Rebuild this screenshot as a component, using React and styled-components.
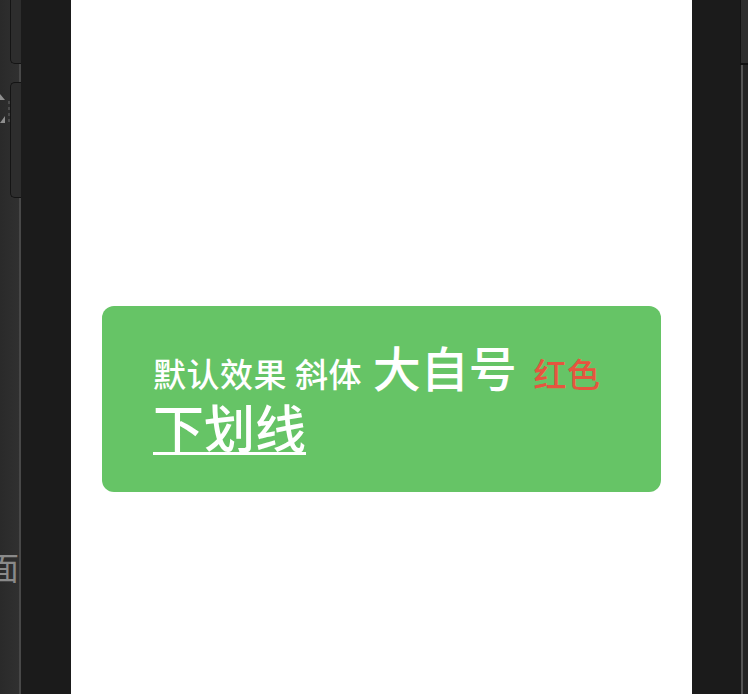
import styled, { createGlobalStyle } from 'styled-components';

const GlobalStyle = createGlobalStyle`
  html, body {
    margin: 0;
    padding: 0;
    background: #1b1b1b;
    overflow: hidden;
  }
  #root {
    height: 694px;
  }
`;

// Workspace frame: left dock, simulator screen, right dock
const Workspace = styled.div`
  display: flex;
  height: 694px;
  width: 748px;
  background: #1b1b1b;
  font-family: "Noto Sans CJK SC", "Noto Sans", sans-serif;
`;

const LeftDock = styled.div`
  width: 71px;
  flex-shrink: 0;
  display: flex;
`;

const SidePanel = styled.div`
  width: 19px;
  flex-shrink: 0;
  background: linear-gradient(90deg, #2a2a2a, #303030);
  border-right: 2px solid #484848;
  display: flex;
  flex-direction: column;
`;

const DockTab = styled.div`
  margin-left: 10px;
  width: 10px;
  height: ${({ h }) => h}px;
  margin-top: ${({ top }) => top}px;
  background: #2d2d2d;
  border: 1px solid #141414;
  border-top: ${({ first }) => (first ? 'none' : '1px solid #141414')};
  border-right: none;
  border-radius: ${({ first }) => (first ? '0 0 0 5px' : '5px 0 0 5px')};
  position: relative;
  z-index: 1;
  margin-right: -3px;
`;

const TabMarks = styled.div`
  display: flex;
  align-items: center;
  height: 40px;
  margin-top: -107px;
  margin-bottom: 67px;
`;

const CutGlyph = styled.div`
  width: 19px;
  overflow: hidden;
  margin-top: 350px;
  color: #8a8a8a;
  font-size: 32px;
  line-height: 36px;
  display: flex;
  justify-content: flex-end;
`;

const DockGap = styled.div`
  flex: 1;
  background: #1b1b1b;
`;

const Screen = styled.div`
  width: 621px;
  flex-shrink: 0;
  background: #ffffff;
  padding: 306px 31px 0;
  box-sizing: border-box;
`;

const Card = styled.div`
  background: #66c466;
  border-radius: 12px;
  padding: 30px 50px 35px 51px;
`;

const RichText = styled.p`
  margin: 0;
  color: #ffffff;
  font-size: 48px;
  line-height: 60px;
  font-weight: 500;
`;

const Small = styled.span`
  font-size: 33px;
  line-height: 1;
  letter-spacing: 0.5px;
  color: ${({ tone }) => tone || 'inherit'};
  margin-left: ${({ gap }) => gap || 0}px;
`;

const Underlined = styled.span`
  font-size: 51px;
  text-decoration: underline;
  text-decoration-thickness: 3px;
  text-underline-offset: 4px;
`;

const RightDock = styled.div`
  flex: 1;
  display: flex;
`;

const RightEdge = styled.div`
  width: 8px;
  margin-left: auto;
  display: flex;
  flex-direction: column;
`;

const EdgeTab = styled.div`
  height: 63px;
  background: #2e2e2e;
  border-left: 1px solid #121212;
  border-bottom: 2px solid #101010;
`;

const EdgeTrack = styled.div`
  flex: 1;
  margin-left: 1px;
  border-left: 2px solid #555555;
  background: #242424;
`;

export default function App() {
  return (
    <>
      <GlobalStyle />
      <Workspace>
        <LeftDock>
          <SidePanel>
            <DockTab first h={63} top={0} />
            <DockTab h={114} top={18} />
            <TabMarks>
              <svg width="11" height="40" viewBox="0 0 11 40">
                <path d="M0 3 L5 9 L0 9 Z" fill="#8f8f8f" />
                <path d="M0 32 L5 25 L5 32 Z" fill="#8f8f8f" />
                <path d="M9 10 v3 M9 16 v3 M9 22 v3 M9 28 v3" stroke="#555" strokeWidth="1.5" />
              </svg>
            </TabMarks>
            <CutGlyph>面</CutGlyph>
          </SidePanel>
          <DockGap />
        </LeftDock>

        <Screen>
          <Card>
            <RichText>
              <Small>默认效果 斜体</Small> 大自号 <Small tone="#e6553f" gap={6}>红色</Small>{' '}
              <Underlined>下划线</Underlined>
            </RichText>
          </Card>
        </Screen>

        <RightDock>
          <RightEdge>
            <EdgeTab />
            <EdgeTrack />
          </RightEdge>
        </RightDock>
      </Workspace>
    </>
  );
}
